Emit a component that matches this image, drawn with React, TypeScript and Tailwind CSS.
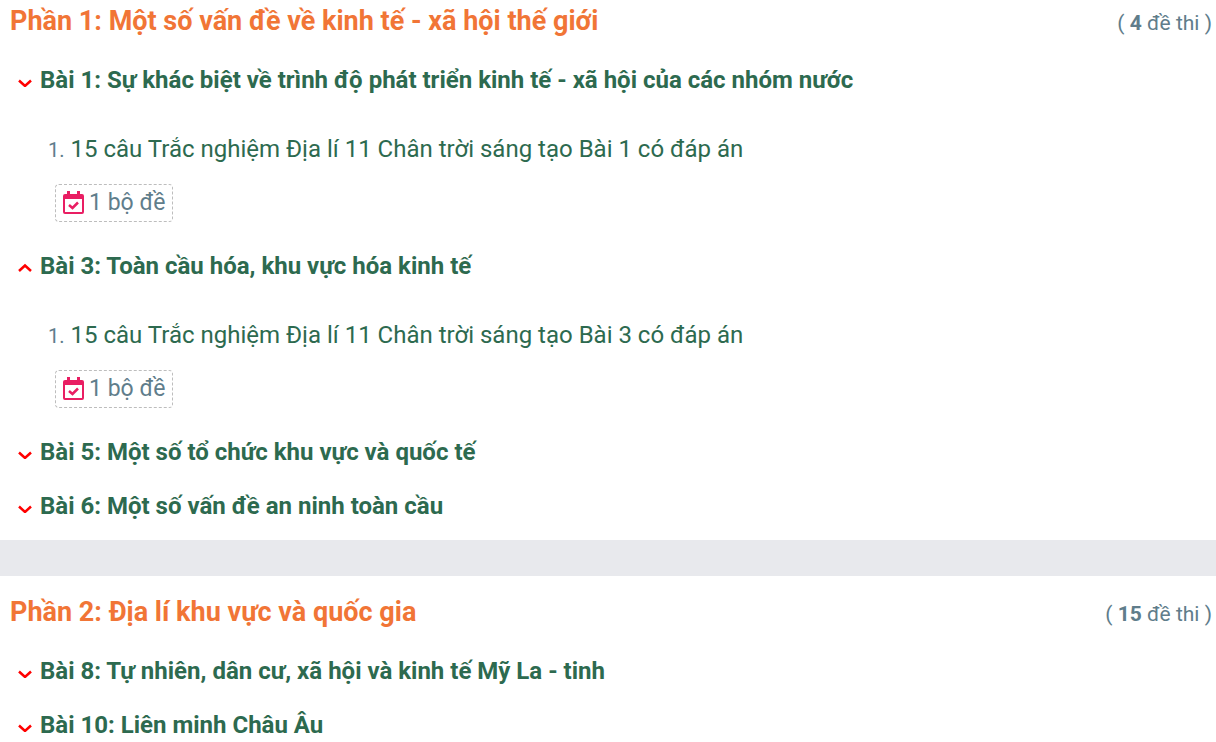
import { useState } from 'react';

type Exam = {
  name: string;
  sets: number;
};

type Lesson = {
  title: string;
  exams: Exam[];
  open?: boolean;
  arrowUp?: boolean;
};

type Part = {
  title: string;
  total: number;
  lessons: Lesson[];
};

const parts: Part[] = [
  {
    title: 'Phần 1: Một số vấn đề về kinh tế - xã hội thế giới',
    total: 4,
    lessons: [
      {
        title: 'Bài 1: Sự khác biệt về trình độ phát triển kinh tế - xã hội của các nhóm nước',
        exams: [{ name: '15 câu Trắc nghiệm Địa lí 11 Chân trời sáng tạo Bài 1 có đáp án', sets: 1 }],
        open: true,
      },
      {
        title: 'Bài 3: Toàn cầu hóa, khu vực hóa kinh tế',
        exams: [{ name: '15 câu Trắc nghiệm Địa lí 11 Chân trời sáng tạo Bài 3 có đáp án', sets: 1 }],
        open: true,
        arrowUp: true,
      },
      { title: 'Bài 5: Một số tổ chức khu vực và quốc tế', exams: [] },
      { title: 'Bài 6: Một số vấn đề an ninh toàn cầu', exams: [] },
    ],
  },
  {
    title: 'Phần 2: Địa lí khu vực và quốc gia',
    total: 15,
    lessons: [
      { title: 'Bài 8: Tự nhiên, dân cư, xã hội và kinh tế Mỹ La - tinh', exams: [] },
      { title: 'Bài 10: Liên minh Châu Âu', exams: [] },
    ],
  },
];

const Chevron = ({ up }: { up: boolean }) => (
  <svg viewBox="0 0 14 10" className="w-3.5 h-2.5 mt-1 shrink-0" fill="none" aria-hidden="true">
    <path d={up ? 'M1 8 L7 2.5 L13 8' : 'M1 3.5 L7 9 L13 3.5'} stroke="#ff0000" strokeWidth="2.5" />
  </svg>
);

const CalendarCheck = () => (
  <svg viewBox="0 0 22 24" className="w-[22px] h-6 shrink-0" aria-hidden="true">
    <path
      fill="#e91e63"
      fillRule="evenodd"
      d="M4 0h3v3h7v-3h3v3h2a2 2 0 0 1 2 2v16a2 2 0 0 1-2 2h-17a2 2 0 0 1-2-2v-16a2 2 0 0 1 2-2h2zM2 8v13h17v-13z"
    />
    <path d="M6 14 L9.500 17 L15 11.500" fill="none" stroke="#e91e63" strokeWidth="2.500" />
  </svg>
);

const ExamItem = ({ exam, index }: { exam: Exam; index: number }) => (
  <li className="pl-12">
    <div className="flex items-baseline gap-1.5 leading-[34px]">
      <span className="text-xl leading-[34px] text-[#607d8b]">{index + 1}.</span>
      <a href="#" className="text-2xl leading-[34px] text-[#2d6a4f]">
        {exam.name}
      </a>
    </div>
    <div className="flex mt-[17px] ml-[7px]">
      <span className="flex items-center gap-1 h-[38px] px-[7px] border border-dashed border-[#bdbdbd] rounded text-[23px] text-[#607d8b]">
        <CalendarCheck />
        {exam.sets} bộ đề
      </span>
    </div>
  </li>
);

const LessonRow = ({ lesson }: { lesson: Lesson }) => {
  const [open, setOpen] = useState(lesson.open ?? false);
  const [arrowUp, setArrowUp] = useState(lesson.arrowUp ?? false);

  const toggle = () => {
    setOpen(!open);
    setArrowUp(!open);
  };

  return (
    <div>
      <button
        type="button"
        onClick={toggle}
        aria-expanded={open}
        className="flex items-center gap-2 w-full h-[54px] pl-[18px] text-left text-2xl font-bold text-[#2d6a4f] cursor-pointer"
      >
        <Chevron up={arrowUp} />
        {lesson.title}
      </button>
      {open && lesson.exams.length > 0 && (
        <ol className="pt-[25px] pb-[17px]">
          {lesson.exams.map((exam, index) => (
            <ExamItem key={exam.name} exam={exam} index={index} />
          ))}
        </ol>
      )}
    </div>
  );
};

const App = () => (
  <main className="bg-white font-[Roboto,sans-serif]">
    {parts.map((part) => (
      <section key={part.title} className="group pb-[7px] last:pb-0 not-first:border-t-[36px] border-[#e8e9ed]">
        <header className="flex items-baseline justify-between pl-2.5 pr-1 pb-3 pt-4 group-first:pt-px">
          <h2 className="text-[27px] leading-10 font-bold text-[#f17536]">{part.title}</h2>
          <span className="text-[21px] leading-9 text-[#607d8b]">
            ( <b className="font-bold">{part.total}</b> đề thi )
          </span>
        </header>
        {part.lessons.map((lesson) => (
          <LessonRow key={lesson.title} lesson={lesson} />
        ))}
      </section>
    ))}
  </main>
);

export default App;
